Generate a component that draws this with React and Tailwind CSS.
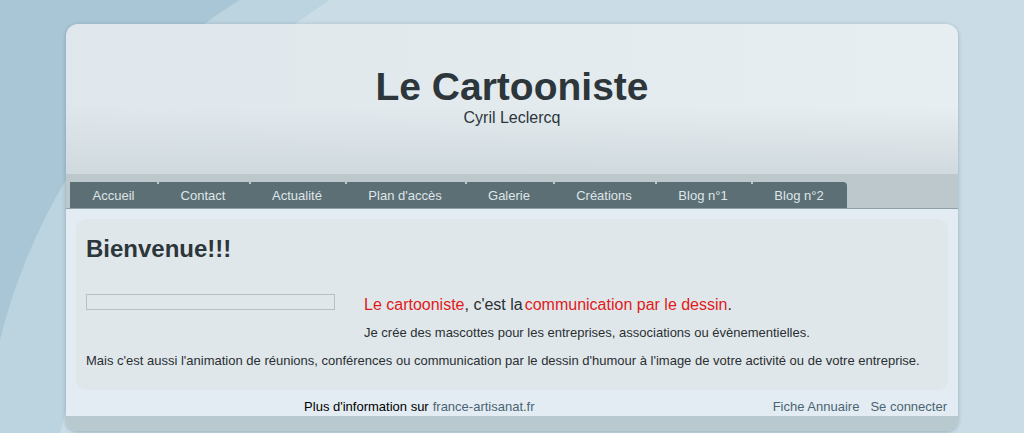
import React from 'react'

const tabs = [
  { label: 'Accueil', w: 'w-[87px]' },
  { label: 'Contact', w: 'w-[92px]' },
  { label: 'Actualité', w: 'w-[96px]' },
  { label: "Plan d'accès", w: 'w-[120px]' },
  { label: 'Galerie', w: 'w-[88px]' },
  { label: 'Créations', w: 'w-[102px]' },
  { label: 'Blog n°1', w: 'w-[96px]' },
  { label: 'Blog n°2', w: 'w-[96px]' },
]

const Backdrop = () => (
  <svg className="absolute inset-0 h-full w-full" viewBox="0 0 1024 433" preserveAspectRatio="none">
    <rect width="1024" height="433" fill="#a8c6d6" />
    <path d="M240,0 C140,60 40,180 0,340 L0,433 L1024,433 L1024,0 Z" fill="#bcd4df" />
    <path d="M330,0 C220,70 120,190 60,433 L1024,433 L1024,0 Z" fill="#cadde6" />
  </svg>
)

const App = () => {
  return (
    <div className="relative h-[433px] w-[1024px] overflow-hidden font-['Liberation_Sans',Arial,sans-serif]">
      <Backdrop />

      <div className="relative mx-auto mt-[24px] w-[892px] rounded-[12px] overflow-hidden shadow-[0_1px_4px_rgba(60,90,105,0.35)]">
        {/* header */}
        <div className="h-[150px] bg-[linear-gradient(180deg,rgba(228,236,240,0)_55%,#d0d9de_100%),linear-gradient(90deg,#dfe7ec,#e7eef1)] flex flex-col items-center pt-[40px]">
          <h1 className="text-[39px] font-bold leading-[45px] text-[#2c363b]">Le Cartooniste</h1>
          <div className="text-[16px] leading-[18px] text-[#2c363b]">Cyril Leclercq</div>
        </div>

        {/* nav */}
        <div className="h-[35px] bg-[#bcc8cc] border-b border-[#8fa1a7] pt-[8px] pl-[4px]">
          <ul className="flex h-[26px]">
            {tabs.map((t, i) => (
              <li
                key={t.label}
                className={`${t.w} relative flex h-full items-center justify-center pt-[2px] bg-[#5c6f75] text-[13px] text-[#dfe6e8] ${i === tabs.length - 1 ? 'rounded-tr-[4px]' : ''}`}
              >
                {t.label}
                {i > 0 && (
                  <span className="absolute left-0 top-0 h-[2px] w-[2px] bg-[#bcc8cc]" />
                )}
              </li>
            ))}
          </ul>
        </div>

        {/* content */}
        <div className="bg-[#e3ecf2] px-[10px] pt-[10px]">
          <div className="rounded-[10px] bg-[#e0e7ea] px-[10px] pt-[15px] pb-[22px] text-[#2a2f32]">
            <h2 className="text-[24px] font-bold leading-[30px] text-[#2c363b]">Bienvenue!!!</h2>

            <div className="mt-[31px] flex">
              <div className="-mt-px h-[16px] w-[249px] border border-[#b9bec0]" />
              <div className="ml-[29px]">
                <p className="text-[16px] leading-[20px]">
                  <span className="text-[#e01a1a]">Le cartooniste</span>
                  <span>, c'est la</span>
                  <span className="ml-[2px] text-[#e01a1a]">communication par le dessin</span>
                  <span>.</span>
                </p>
                <p className="mt-[10px] text-[13px] leading-[15px]">
                  Je crée des mascottes pour les entreprises, associations ou évènementielles.
                </p>
              </div>
            </div>

            <p className="mt-[13px] text-[13px] leading-[15px]">
              Mais c'est aussi l'animation de réunions, conférences ou communication par le dessin d'humour à l'image de votre activité ou de votre entreprise.
            </p>
          </div>

          {/* footer links */}
          <div className="flex h-[26px] pt-[8px] text-[13px] leading-[18px]">
            <div className="flex flex-1 justify-center pr-[10px]">
              <span className="text-black">Plus d'information sur</span>
              <span className="ml-[4px] text-[#4b6474]">france-artisanat.fr</span>
            </div>
            <div className="flex gap-[11px] pr-[1px] text-[#4b6474]">
              <span>Fiche Annuaire</span>
              <span>Se connecter</span>
            </div>
          </div>
        </div>

        {/* bottom bar */}
        <div className="h-[15px] bg-[#b8c9d0]" />
      </div>
    </div>
  )
}

export default App
